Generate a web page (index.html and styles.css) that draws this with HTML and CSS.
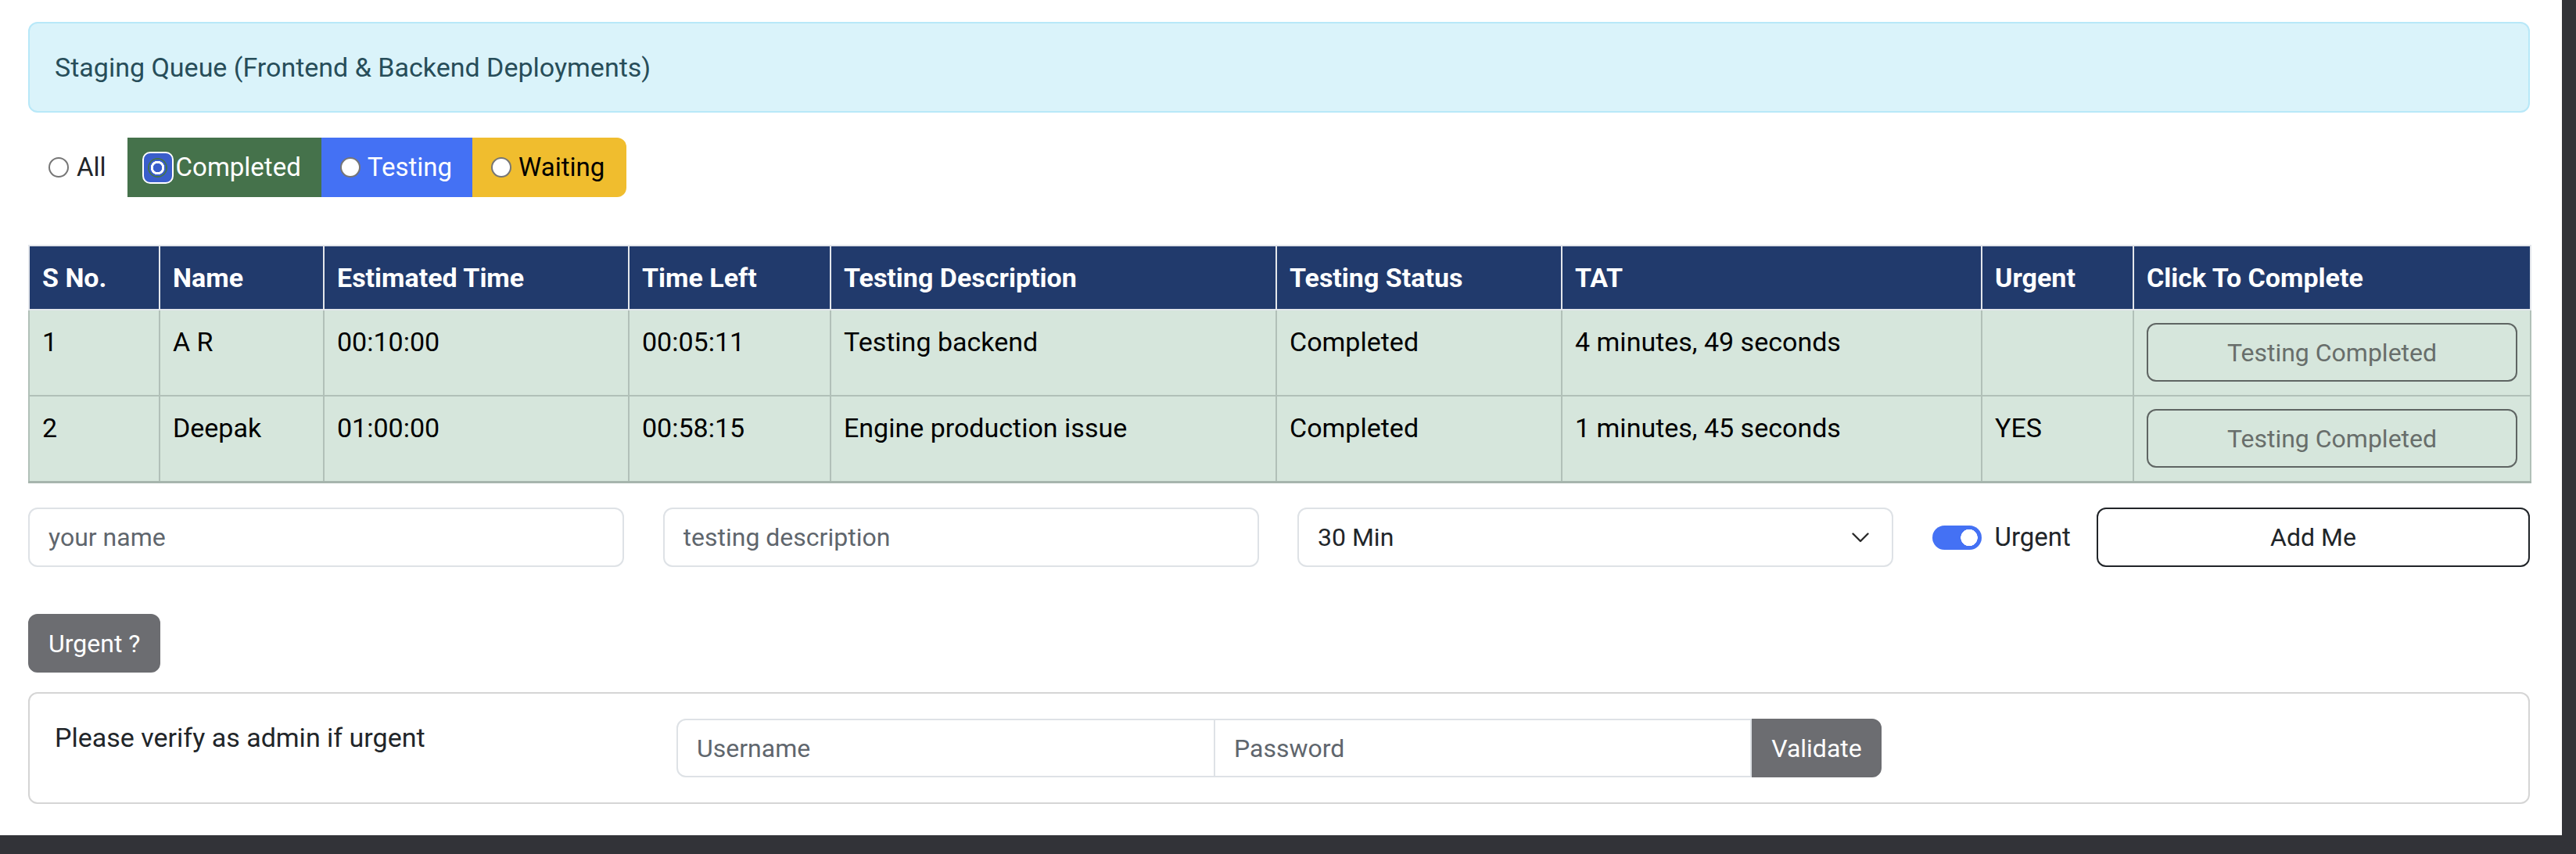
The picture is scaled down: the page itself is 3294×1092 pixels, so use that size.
FILE: index.html
```html
<!DOCTYPE html>
<html lang="en">
<head>
<meta charset="utf-8">
<title>Staging Queue</title>
<link rel="stylesheet" href="styles.css">
</head>
<body>
<main class="page">
  <div class="alert">Staging Queue (Frontend &amp; Backend Deployments)</div>

  <div class="filter-row">
    <label class="opt-all"><input type="radio" name="f" class="radio">All</label>
    <div class="btn-group">
      <label class="seg seg-green"><span class="focus-ring"><input type="radio" name="f" class="radio radio-on" checked></span>Completed</label>
      <label class="seg seg-blue"><input type="radio" name="f" class="radio">Testing</label>
      <label class="seg seg-yellow"><input type="radio" name="f" class="radio">Waiting</label>
    </div>
  </div>

  <table class="queue">
    <colgroup>
      <col class="c-sno"><col class="c-name"><col class="c-est"><col class="c-left"><col class="c-desc"><col class="c-status"><col class="c-tat"><col class="c-urgent"><col class="c-action">
    </colgroup>
    <thead>
      <tr>
        <th>S No.</th><th>Name</th><th>Estimated Time</th><th>Time Left</th><th>Testing Description</th><th>Testing Status</th><th>TAT</th><th>Urgent</th><th>Click To Complete</th>
      </tr>
    </thead>
    <tbody>
      <tr>
        <td>1</td><td>A R</td><td>00:10:00</td><td>00:05:11</td><td>Testing backend</td><td>Completed</td><td>4 minutes, 49 seconds</td><td></td>
        <td><button class="btn-done" disabled>Testing Completed</button></td>
      </tr>
      <tr>
        <td>2</td><td>Deepak</td><td>01:00:00</td><td>00:58:15</td><td>Engine production issue</td><td>Completed</td><td>1 minutes, 45 seconds</td><td>YES</td>
        <td><button class="btn-done" disabled>Testing Completed</button></td>
      </tr>
    </tbody>
  </table>

  <div class="form-row">
    <input class="field" type="text" placeholder="your name">
    <input class="field" type="text" placeholder="testing description">
    <div class="field select-box">
      <span>30 Min</span>
      <svg class="chevron" width="22" height="13" viewBox="0 0 22 13"><polyline points="1.5,1.5 11,11 20.5,1.5" fill="none" stroke="#2b2b2b" stroke-width="2.4" stroke-linecap="round" stroke-linejoin="round"/></svg>
    </div>
    <label class="switch"><input type="checkbox" class="toggle" checked>Urgent</label>
    <button class="btn-add">Add Me</button>
  </div>

  <button class="btn-urgent">Urgent ?</button>

  <div class="card">
    <p class="card-text">Please verify as admin if urgent</p>
    <div class="input-group">
      <input class="ig-user" type="text" placeholder="Username">
      <input class="ig-pass" type="password" placeholder="Password">
      <button class="ig-btn">Validate</button>
    </div>
  </div>
</main>
</body>
</html>
```

FILE: styles.css
```css
* { box-sizing: border-box; }

html, body {
  margin: 0;
  height: 1092px;
  overflow: hidden;
}

body {
  background: #323338;
  display: grid;
  grid-template-columns: 3276px 18px;
  grid-template-rows: 1068px 24px;
  font-family: Roboto, "Liberation Sans", sans-serif;
  font-size: 34px;
  line-height: 48px;
  color: #212529;
}

.page {
  background: #fff;
  padding: 28px 41px 0 36px;
  overflow: hidden;
}

/* alert */
.alert {
  height: 116px;
  padding: 0 32px;
  display: flex;
  align-items: center;
  background: #daf3fa;
  border: 2px solid #b8e8f8;
  border-radius: 12px;
  color: #274d59;
  margin-bottom: 32px;
}

/* filter radios */
.filter-row {
  display: flex;
  align-items: center;
  height: 76px;
  margin-bottom: 61px;
}

.radio {
  appearance: none;
  -webkit-appearance: none;
  width: 26px;
  height: 26px;
  margin: 0;
  border-radius: 50%;
  border: 2px solid #767676;
  background: #fff;
  flex: none;
}

.opt-all {
  display: flex;
  align-items: center;
  gap: 10px;
  padding-left: 26px;
  font-size: 33px;
  color: #212529;
}

.btn-group {
  display: flex;
  height: 76px;
  margin-left: 27px;
}

.seg {
  display: flex;
  align-items: center;
  gap: 9px;
  padding: 0 26px 0 24px;
  font-size: 33px;
  color: #fff;
}

.seg-green { background: #45724b; padding-left: 26px; gap: 10px; }
.seg-blue { background: #4471f4; }
.seg-yellow {
  background: #f0bd2e;
  color: #000;
  border-radius: 0 12px 12px 0;
  padding-right: 28px;
}

.focus-ring {
  width: 40px;
  height: 41px;
  margin: 0 -7px;
  border: 2px solid #fff;
  border-radius: 10px;
  background: #3a5ecb;
  display: grid;
  place-items: center;
  flex: none;
}

.radio-on {
  width: 25px;
  height: 25px;
  border: none;
  background: radial-gradient(circle, #3a5ecb 0 5.5px, #fff 6px 8.5px, #3a5ecb 9px 10.5px, #45724b 11px);
}

/* table */
.queue {
  width: 3199px;
  table-layout: fixed;
  border-collapse: collapse;
  margin-bottom: 31px;
}

.c-sno { width: 167px; }
.c-name { width: 210px; }
.c-est { width: 390px; }
.c-left { width: 258px; }
.c-desc { width: 570px; }
.c-status { width: 365px; }
.c-tat { width: 537px; }
.c-urgent { width: 194px; }
.c-action { width: 508px; }

.queue th {
  background: #213a6c;
  color: #fff;
  font-weight: 700;
  text-align: left;
  padding: 16px 16px;
  border: 2px solid #e3e6eb;
  vertical-align: middle;
}

.queue td {
  background: #d6e6dc;
  color: #000;
  padding: 16px 16px 17px;
  border: 2px solid #b1c0b8;
  vertical-align: top;
}

.queue tbody tr + tr td { border-top-color: #a6b5ad; }
.queue tbody tr:last-child td { border-bottom: 3px solid #a6b5ad; }

.btn-done {
  display: block;
  width: 100%;
  height: 75px;
  background: transparent;
  border: 2px solid #5f6563;
  border-radius: 12px;
  color: #686e6b;
  font-family: inherit;
  font-size: 32px;
}

/* form row */
.form-row {
  display: grid;
  grid-template-columns: 762px 762px 762px 161px 1fr;
  column-gap: 49.5px;
  align-items: center;
  margin-bottom: 60px;
}

.field {
  height: 76px;
  border: 2px solid #dee2e6;
  border-radius: 12px;
  padding: 0 24px;
  font-family: inherit;
  font-size: 32px;
  color: #212529;
  background: #fff;
  outline: none;
}

.field::placeholder,
.input-group input::placeholder { color: #5f666d; }

.select-box {
  display: flex;
  align-items: center;
  justify-content: space-between;
  padding-right: 29px;
}

.switch {
  display: flex;
  align-items: center;
  gap: 17px;
  white-space: nowrap;
  font-size: 33px;
}

.toggle {
  appearance: none;
  -webkit-appearance: none;
  width: 63px;
  height: 31px;
  margin: 0;
  border-radius: 16px;
  flex: none;
  background: radial-gradient(circle 11px at 47px 50%, #fff 10.5px, transparent 11px), #4471f4;
}

.btn-add {
  height: 76px;
  background: #fff;
  border: 2px solid #212529;
  border-radius: 12px;
  font-family: inherit;
  font-size: 32px;
  color: #212529;
}

/* urgent button */
.btn-urgent {
  display: block;
  height: 75px;
  padding: 0 24px;
  background: #6c6d71;
  color: #fff;
  border: 2px solid #6c6d71;
  border-radius: 12px;
  font-family: inherit;
  font-size: 32px;
  margin: 0 0 25px;
}

/* card */
.card {
  display: grid;
  grid-template-columns: 747px 1543px;
  column-gap: 48px;
  height: 143px;
  padding: 32px;
  border: 2px solid #d5d5d5;
  border-radius: 12px;
}

.card-text {
  margin: 0;
  color: #212529;
}

.input-group {
  display: flex;
  height: 75px;
}

.input-group input {
  height: 75px;
  border: 2px solid #dee2e6;
  padding: 0 24px;
  font-family: inherit;
  font-size: 32px;
  background: #fff;
  outline: none;
}

.ig-user {
  width: 689px;
  border-radius: 12px 0 0 12px;
}

.ig-pass {
  width: 688px;
  margin-left: -2px;
}

.ig-btn {
  width: 166px;
  height: 75px;
  background: #6c6d71;
  border: 2px solid #6c6d71;
  border-radius: 0 12px 12px 0;
  color: #fff;
  font-family: inherit;
  font-size: 32px;
  padding: 0;
}
```
